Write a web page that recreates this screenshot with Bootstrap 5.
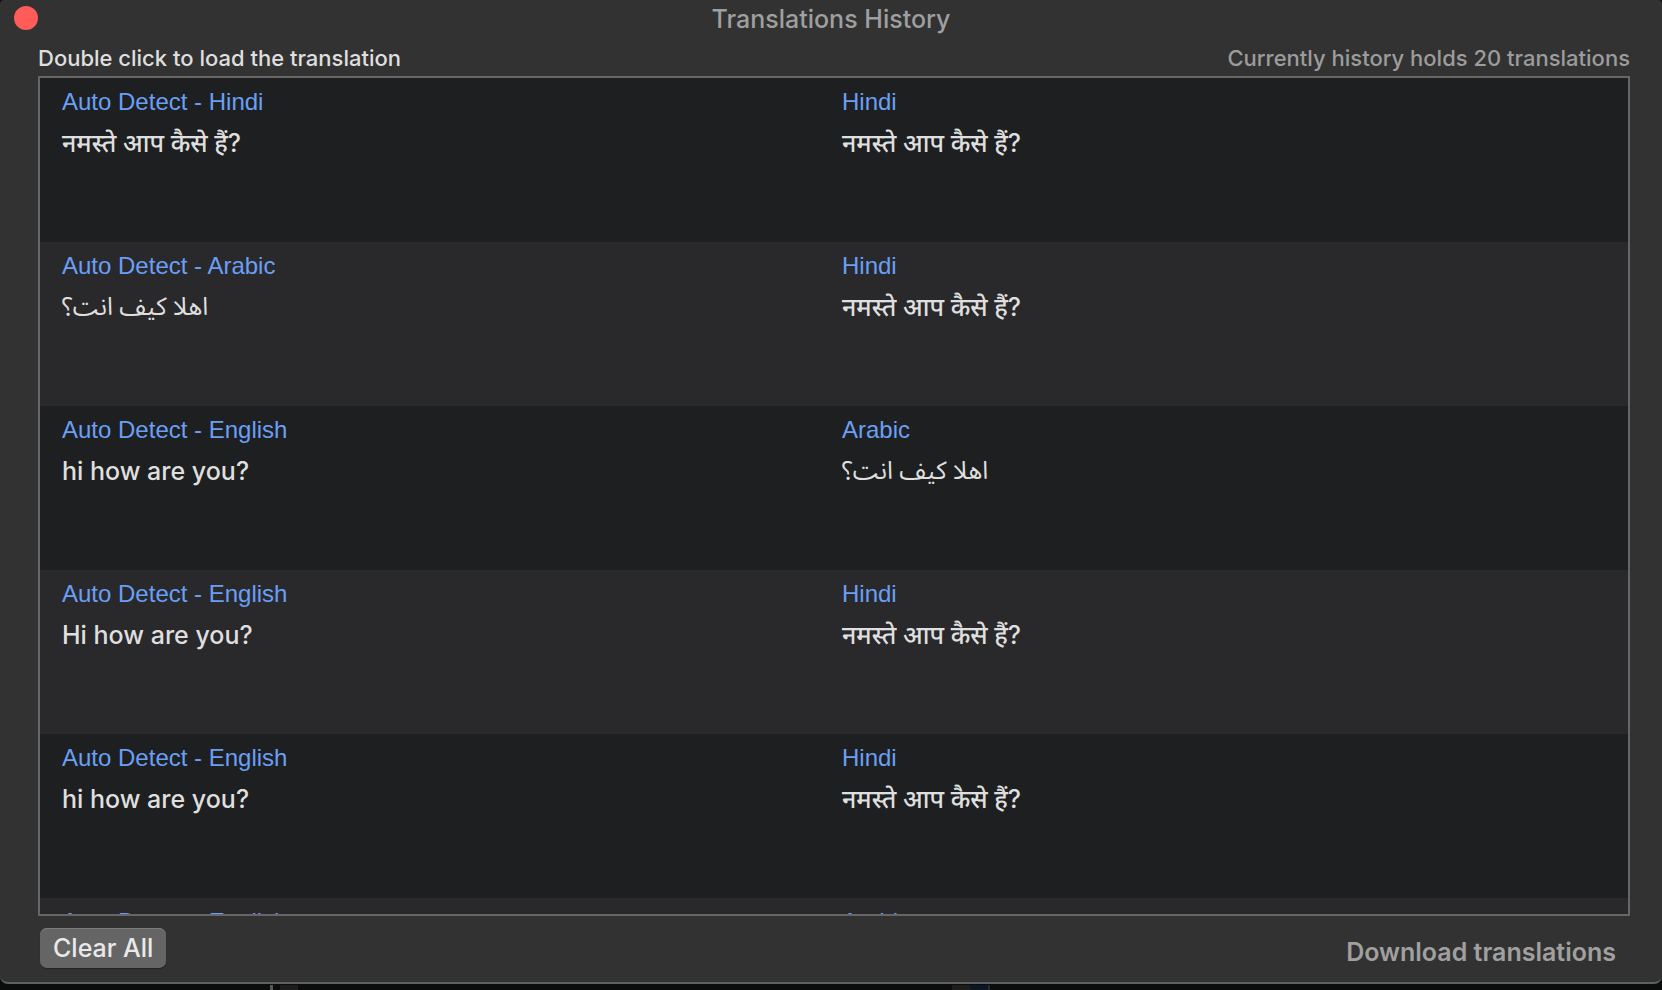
<!DOCTYPE html>
<html lang="en">
<head>
<meta charset="utf-8">
<meta name="viewport" content="width=device-width, initial-scale=1">
<title>Translations History</title>
<link href="https://cdn.jsdelivr.net/npm/bootstrap@5.3.0/dist/css/bootstrap.min.css" rel="stylesheet">
<style>
  body { background: #0b0c0c; color: #dfdfdf; font-family: Inter, "Noto Sans", sans-serif; }
  .app-window { background: #323232; border-bottom: 2px solid #5f5f5f; border-radius: 4px 4px 8px 8px; }
  .title-bar { height: 38px; }
  .window-title { color: #9f9f9f; font-size: 25px; line-height: 38px; font-weight: 500; }
  .close-dot { left: 14px; top: 6px; width: 24px; height: 24px; border-radius: 50%; background: #ff5c59; }
  .window-body { padding: 0 32px 0 38px; }
  .hints { font-size: 22px; line-height: 30px; font-weight: 500; padding: 5px 0 3px; }
  .hint-count { color: #9c9c9c; }
  .history-list { border: 2px solid #666; background: #1e1f21; }
  .history-table { table-layout: fixed; }
  .history-table tr { height: 164px; }
  .history-table tr:nth-child(even) { background: #29292b; }
  .history-table td { vertical-align: top; padding: 10px 8px 0; }
  .history-table td:first-child { padding-left: 22px; }
  .lang-name { color: #6a9ff5; font-family: "Liberation Sans", sans-serif; font-size: 24px; line-height: 28px; }
  .phrase { font-size: 25px; line-height: 32px; font-weight: 500; margin-top: 11px; }
  .phrase:lang(hi) { font-family: Inter, "Noto Sans Devanagari", "Noto Sans", sans-serif; }
  .phrase:lang(ar) { font-family: "Noto Sans Arabic", "DejaVu Sans", sans-serif; font-weight: 400; }
  .footer-bar { height: 66px; padding: 12px 14px 0 2px; }
  .btn-clear, .btn-clear:hover { background: #656565; color: #e9e9e9; font-size: 25px; line-height: 40px; font-weight: 500; padding: 0 13px; border: 0; border-radius: 7px; box-shadow: inset 0 1px #7c7c7c, 0 1px 1px #222; }
  .btn-download, .btn-download:disabled { color: #a0a0a0; font-size: 25px; line-height: 32px; font-weight: 600; padding: 0; border: 0; opacity: 1; margin-top: 8px; }
  .desktop-strip { height: 6px; background: #0b0c0c; }
</style>
</head>
<body>
<div class="vh-100 d-flex flex-column overflow-hidden">
  <main class="app-window flex-grow-1 d-flex flex-column overflow-hidden">
    <header class="title-bar position-relative text-center flex-shrink-0">
      <button type="button" class="close-dot position-absolute border-0 p-0" aria-label="Close"></button>
      <h1 class="window-title m-0">Translations History</h1>
    </header>
    <div class="window-body flex-grow-1 d-flex flex-column overflow-hidden">
      <div class="hints d-flex justify-content-between flex-shrink-0">
        <span>Double click to load the translation</span>
        <span class="hint-count">Currently history holds 20 translations</span>
      </div>
      <div class="history-list flex-grow-1 overflow-hidden">
        <table class="history-table w-100">
          <tbody>
            <tr>
              <td><div class="lang-name">Auto Detect - Hindi</div><div class="phrase" lang="hi">नमस्ते आप कैसे हैं?</div></td>
              <td><div class="lang-name">Hindi</div><div class="phrase" lang="hi">नमस्ते आप कैसे हैं?</div></td>
            </tr>
            <tr>
              <td><div class="lang-name">Auto Detect - Arabic</div><div class="phrase" lang="ar"><bdi dir="rtl">اهلا كيف انت؟</bdi></div></td>
              <td><div class="lang-name">Hindi</div><div class="phrase" lang="hi">नमस्ते आप कैसे हैं?</div></td>
            </tr>
            <tr>
              <td><div class="lang-name">Auto Detect - English</div><div class="phrase">hi how are you?</div></td>
              <td><div class="lang-name">Arabic</div><div class="phrase" lang="ar"><bdi dir="rtl">اهلا كيف انت؟</bdi></div></td>
            </tr>
            <tr>
              <td><div class="lang-name">Auto Detect - English</div><div class="phrase">Hi how are you?</div></td>
              <td><div class="lang-name">Hindi</div><div class="phrase" lang="hi">नमस्ते आप कैसे हैं?</div></td>
            </tr>
            <tr>
              <td><div class="lang-name">Auto Detect - English</div><div class="phrase">hi how are you?</div></td>
              <td><div class="lang-name">Hindi</div><div class="phrase" lang="hi">नमस्ते आप कैसे हैं?</div></td>
            </tr>
            <tr>
              <td><div class="lang-name">Auto Detect - English</div></td>
              <td><div class="lang-name">Arabic</div></td>
            </tr>
          </tbody>
        </table>
      </div>
      <footer class="footer-bar d-flex justify-content-between align-items-start flex-shrink-0">
        <button type="button" class="btn btn-clear">Clear All</button>
        <button type="button" class="btn btn-download" disabled>Download translations</button>
      </footer>
    </div>
  </main>
  <div class="desktop-strip d-flex flex-shrink-0" aria-hidden="true">
    <svg width="1000" height="6"><path fill="#555" d="M270 1h3v5h-3z"/><path fill="#1d1d1c" d="M280 1h18v5h-18zM952 1h18v5h-18z"/><path fill="#0b1722" d="M970 1h18v5h-18z"/><path fill="#262a2e" d="M988 1h2v5h-2z"/></svg>
  </div>
</div>
<script src="https://cdn.jsdelivr.net/npm/bootstrap@5.3.0/dist/js/bootstrap.bundle.min.js"></script>
</body>
</html>
